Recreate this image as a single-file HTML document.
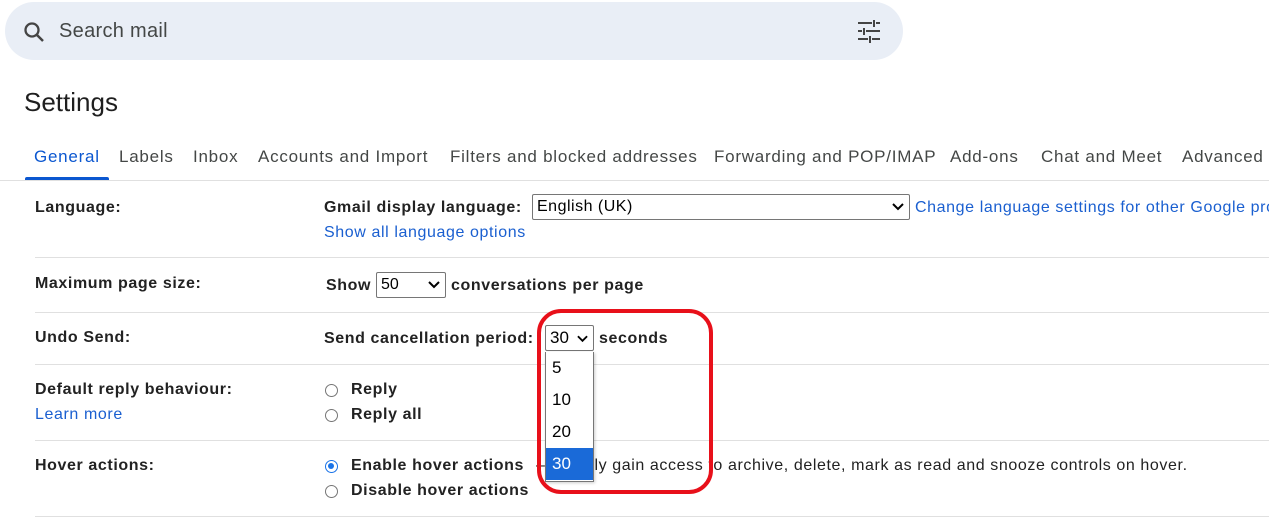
<!DOCTYPE html>
<html><head><style>
body{margin:0;width:1269px;height:520px;overflow:hidden;background:#fff;font-family:"Liberation Sans",Arial,sans-serif;color:#202124;position:relative}
.a{position:absolute;white-space:nowrap}
.search{left:5px;top:2px;width:898px;height:58px;border-radius:29px;background:#e9eef6}
.tab{top:147px;font-size:17px;color:#444746;letter-spacing:0.75px}
.line{position:absolute;left:35px;right:0;height:1px;background:#e0e0e0}
.lbl{font-size:16px;font-weight:bold;color:#222;left:35px;letter-spacing:0.6px}
.t{font-size:16px;color:#222;letter-spacing:0.6px}
.b{font-weight:bold}
.link{color:#1a5fd0}
.sel{position:absolute;border:1px solid #767676;border-radius:2px;background:#fff;font-size:16px;padding-left:4px;box-sizing:border-box;color:#000}
.radio{position:absolute;width:13px;height:13px;border:1px solid #767676;border-radius:50%;box-sizing:border-box}
</style></head><body>
<div class="a search"></div>
<svg class="a" style="left:22px;top:20px" width="24" height="24" viewBox="0 0 24 24"><circle cx="10" cy="10" r="6.5" fill="none" stroke="#444" stroke-width="2.3"/><path d="M15 15l6 6" stroke="#444" stroke-width="2.5"/></svg>
<div class="a" style="left:59px;top:20px;font-size:20px;color:#444746;letter-spacing:0.3px">Search mail</div>
<svg class="a" style="left:856px;top:19px" width="26" height="24" viewBox="0 0 26 24"><path d="M2 4h14M20 4h4M2 12h4M10 12h14M2 20h10M16 20h8M18 1v7M8 9v7M14 17v7" stroke="#444" stroke-width="2"/></svg>
<div class="a" style="left:24px;top:87px;font-size:26px;color:#1f1f1f">Settings</div>
<div class="a tab" style="left:34px;color:#0b57d0">General</div>
<div class="a" style="left:25px;top:177px;width:84px;height:3px;background:#0b57d0;border-radius:2px 2px 0 0"></div>
<div class="a tab" style="left:119px">Labels</div>
<div class="a tab" style="left:193px">Inbox</div>
<div class="a tab" style="left:258px">Accounts and Import</div>
<div class="a tab" style="left:450px">Filters and blocked addresses</div>
<div class="a tab" style="left:714px">Forwarding and POP/IMAP</div>
<div class="a tab" style="left:950px">Add-ons</div>
<div class="a tab" style="left:1041px">Chat and Meet</div>
<div class="a tab" style="left:1182px">Advanced</div>
<div class="line" style="top:180px;left:0"></div>
<div class="line" style="top:257px"></div>
<div class="line" style="top:312px"></div>
<div class="line" style="top:364px"></div>
<div class="line" style="top:440px"></div>
<div class="line" style="top:516px"></div>

<div class="a lbl" style="top:199px">Language:</div>
<div class="a t b" style="left:324px;top:199px">Gmail display language:</div>
<div class="sel" style="left:532px;top:194px;width:378px;height:26px;line-height:24px;letter-spacing:0.5px">English (UK)<svg style="position:absolute;right:5px;top:8px" width="12" height="8" viewBox="0 0 12 8"><path d="M1 1l5 5 5-5" fill="none" stroke="#000" stroke-width="2"/></svg></div>
<div class="a t link" style="left:915px;top:199px">Change language settings for other Google products</div>
<div class="a t link" style="left:324px;top:224px">Show all language options</div>

<div class="a lbl" style="top:275px">Maximum page size:</div>
<div class="a t b" style="left:326px;top:277px">Show</div>
<div class="sel" style="left:376px;top:272px;width:70px;height:26px;line-height:24px">50<svg style="position:absolute;right:5px;top:8px" width="12" height="8" viewBox="0 0 12 8"><path d="M1 1l5 5 5-5" fill="none" stroke="#000" stroke-width="2"/></svg></div>
<div class="a t b" style="left:451px;top:277px">conversations per page</div>

<div class="a lbl" style="top:329px">Undo Send:</div>
<div class="a t b" style="left:324px;top:330px">Send cancellation period:</div>
<div class="sel" style="left:545px;top:325px;width:49px;height:26px;line-height:24px;font-size:17px">30<svg style="position:absolute;right:5px;top:9px" width="11" height="8" viewBox="0 0 12 8"><path d="M1 1l5 5 5-5" fill="none" stroke="#000" stroke-width="2"/></svg></div>
<div class="a t b" style="left:599px;top:330px">seconds</div>

<div class="a lbl" style="top:381px">Default reply behaviour:</div>
<div class="a t link" style="left:35px;top:406px">Learn more</div>
<div class="radio" style="left:325px;top:384px"></div>
<div class="a t b" style="left:351px;top:381px">Reply</div>
<div class="radio" style="left:325px;top:409px"></div>
<div class="a t b" style="left:351px;top:406px">Reply all</div>

<div class="a lbl" style="top:457px">Hover actions:</div>
<div class="radio" style="left:325px;top:460px;border:1.5px solid #1a73e8"><div style="margin:2px;width:6px;height:6px;border-radius:50%;background:#1a73e8"></div></div>
<div class="a t b" style="left:351px;top:457px">Enable hover actions</div>
<div class="a t" style="left:536px;top:457px">– Quickly gain access to archive, delete, mark as read and snooze controls on hover.</div>
<div class="radio" style="left:325px;top:485px"></div>
<div class="a t b" style="left:351px;top:482px">Disable hover actions</div>

<div class="a" style="left:545px;top:352px;width:49px;height:130px;background:#fff;border:1px solid #767676;border-top:none;box-sizing:border-box;box-shadow:1px 1px 3px rgba(0,0,0,.2);font-size:17px;color:#000">
<div style="height:32px;line-height:32px;padding-left:6px">5</div>
<div style="height:32px;line-height:32px;padding-left:6px">10</div>
<div style="height:32px;line-height:32px;padding-left:6px">20</div>
<div style="height:32px;line-height:32px;padding-left:6px;background:#1a6ad8;color:#fff">30</div>
</div>
<div class="a" style="left:537px;top:309px;width:168px;height:177px;border:4px solid #e8101a;border-radius:24px"></div>
</body></html>
